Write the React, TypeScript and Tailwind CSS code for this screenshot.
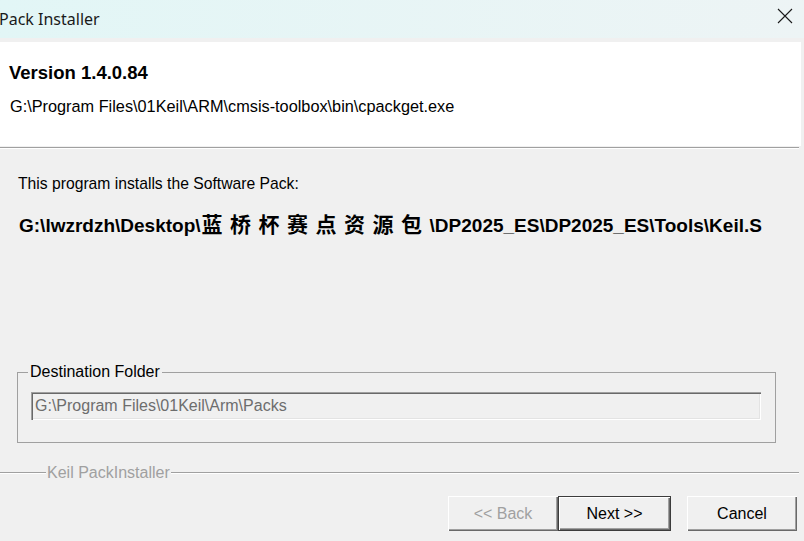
import React from "react";

const raised =
  "shadow-[inset_1px_1px_0_#ffffff,inset_-1px_-1px_0_#696969,inset_-2px_-2px_0_#a0a0a0]";

const Btn = (props: { label: string; disabled?: boolean; primary?: boolean }) => {
  const { label, disabled, primary } = props;
  return (
    <div
      className={
        "h-[35px] flex items-center justify-center bg-[#f0f0f0] text-[16px] " +
        (primary
          ? "w-[113px] border border-[#3c3c3c] shadow-[inset_1px_1px_0_#ffffff,inset_-1px_-1px_0_#696969,inset_-2px_-2px_0_#a0a0a0]"
          : "w-[110px] " + raised) +
        (disabled ? " text-[#a0a0a0]" : " text-black")
      }
    >
      {label}
    </div>
  );
};

export default function App() {
  return (
    <div className="w-[804px] h-[541px] bg-[#f0f0f0] flex flex-col overflow-hidden font-['Liberation_Sans',Arial,sans-serif] text-black">
      {/* title bar */}
      <div className="h-[38px] shrink-0 flex items-center justify-between bg-linear-to-r from-[#e2f6f6] to-[#edf4f5]">
        <span className="ml-[-1px] text-[16px] text-[#1a1a1a] font-['Noto_Sans',sans-serif] leading-none">
          Pack Installer
        </span>
        <svg width="16" height="16" viewBox="0 0 16 16" className="mr-[11px] mb-[6px]">
          <path d="M1 1 L15 15 M15 1 L1 15" stroke="#1a1a1a" strokeWidth="1.1" fill="none" />
        </svg>
      </div>

      {/* header panel */}
      <div className="mt-[4px] h-[104px] w-[801px] shrink-0 bg-white flex flex-col pl-[9px]">
        <div className="mt-[20px] text-[18.5px] font-bold leading-[22px]">Version 1.4.0.84</div>
        <div className="mt-[12px] whitespace-nowrap text-[16.3px] leading-[20px] pl-[1px]">
          G:\Program Files\01Keil\ARM\cmsis-toolbox\bin\cpackget.exe
        </div>
      </div>
      <div className="w-[799px] h-[2px] border-t border-[#a0a0a0] border-b border-b-white shrink-0 mt-[1px]" />

      {/* body */}
      <div className="flex flex-col pl-[18px]">
        <div className="mt-[25px] text-[15.7px] leading-[20px]">This program installs the Software Pack:</div>
        <div className="mt-[16px] whitespace-nowrap text-[19px] font-bold leading-[26px] pl-[1px]">
          G:\lwzrdzh\Desktop\
          <span className="font-['Noto_Sans_CJK_SC',sans-serif] text-[21px] tracking-[7.5px] pl-[1px]">蓝桥杯赛点资源包</span>
          \DP2025_ES\DP2025_ES\Tools\Keil.S
        </div>
      </div>

      <fieldset className="mt-[124px] ml-[17px] w-[759px] h-[80px] border border-[#a0a0a0] shrink-0">
        <legend className="ml-[10px] px-[2px] text-[16px] leading-[18px]">Destination Folder</legend>
        <div className="mt-[11px] ml-[13px] w-[730px] h-[28px] flex items-center pl-[4px] bg-[#f0f0f0] text-[16px] text-[#6d6d6d] shadow-[inset_1px_1px_0_#a0a0a0,inset_2px_2px_0_#696969,inset_-1px_-1px_0_#ffffff,inset_-2px_-2px_0_#e3e3e3]">
          G:\Program Files\01Keil\Arm\Packs
        </div>
      </fieldset>

      {/* separator */}
      <div className="mt-[21px] w-[799px] flex items-center shrink-0">
        <div className="w-[46px] h-[2px] border-t border-[#a0a0a0] border-b border-b-white" />
        <span className="px-[1px] text-[16px] leading-[18px] text-[#a0a0a0]">Keil PackInstaller</span>
        <div className="flex-1 h-[2px] border-t border-[#a0a0a0] border-b border-b-white" />
      </div>

      {/* buttons */}
      <div className="mt-[14px] flex justify-end pr-[7px]">
        <Btn label="<< Back" disabled />
        <Btn label="Next >>" primary />
        <div className="w-[16px]" />
        <Btn label="Cancel" />
      </div>
    </div>
  );
}
